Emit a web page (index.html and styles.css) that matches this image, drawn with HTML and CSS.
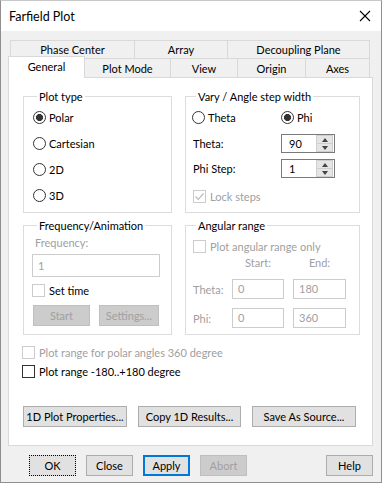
FILE: index.html
```html
<!DOCTYPE html>
<html>
<head>
    <meta charset="UTF-8">
    <title>Farfield Plot</title>
    <link rel="stylesheet" href="styles.css">
</head>
<body>
<div class="window">
    <div class="titlebar">
        <span class="title">Farfield Plot</span>
        <svg class="close" width="12" height="12" viewBox="0 0 12 12">
            <path d="M1 1 L11 11 M11 1 L1 11" stroke="#000" stroke-width="1.1" fill="none"/>
        </svg>
    </div>
    <div class="client">
        <div class="tabs">
            <div class="tabrow back">
                <span class="tab" style="width:124px">Phase Center</span>
                <span class="tab" style="width:93px">Array</span>
                <span class="tab last" style="width:143px">Decoupling Plane</span>
            </div>
            <div class="tabrow front">
                <span class="tab active" style="width:77px">General</span>
                <span class="tab" style="width:85px">Plot Mode</span>
                <span class="tab" style="width:67px">View</span>
                <span class="tab" style="width:68px">Origin</span>
                <span class="tab last" style="width:65px">Axes</span>
            </div>
        </div>

        <div class="panel">
            <div class="groups">
                <fieldset class="group plot-type">
                    <legend>Plot type</legend>
                    <div class="opt"><span class="radio on"></span>Polar</div>
                    <div class="opt"><span class="radio"></span>Cartesian</div>
                    <div class="opt"><span class="radio"></span>2D</div>
                    <div class="opt"><span class="radio"></span>3D</div>
                </fieldset>

                <fieldset class="group vary">
                    <legend>Vary / Angle step width</legend>
                    <div class="opt pair">
                        <span class="cell"><span class="radio"></span>Theta</span>
                        <span class="cell"><span class="radio on"></span>Phi</span>
                    </div>
                    <div class="field">
                        <span class="cell">Theta:</span>
                        <span class="spin"><span class="val">90</span><span class="arrows"><i class="up"></i><i class="down"></i></span></span>
                    </div>
                    <div class="field">
                        <span class="cell">Phi Step:</span>
                        <span class="spin"><span class="val">1</span><span class="arrows"><i class="up"></i><i class="down"></i></span></span>
                    </div>
                    <div class="check lock off">
                        <span class="box">
                            <svg width="11" height="11" viewBox="0 0 11 11"><path d="M1.5 5.5 L4.3 8.3 L9.5 2.5" stroke="#bcbcbc" stroke-width="1.2" fill="none"/></svg>
                        </span>Lock steps
                    </div>
                </fieldset>

                <fieldset class="group freq">
                    <legend>Frequency/Animation</legend>
                    <div class="dim">Frequency:</div>
                    <div class="textbox wide">1</div>
                    <div class="check off dark-text"><span class="box"></span>Set time</div>
                    <div class="btnrow">
                        <span class="btn disabled start">Start</span>
                        <span class="btn disabled settings">Settings...</span>
                    </div>
                </fieldset>

                <fieldset class="group angular">
                    <legend>Angular range</legend>
                    <div class="check off"><span class="box"></span>Plot angular range only</div>
                    <div class="range">
                        <span></span>
                        <span class="head">Start:</span>
                        <span class="head end">End:</span>
                        <span class="dim">Theta:</span>
                        <span class="textbox">0</span>
                        <span class="textbox end">180</span>
                        <span class="dim">Phi:</span>
                        <span class="textbox">0</span>
                        <span class="textbox end">360</span>
                    </div>
                </fieldset>
            </div>

            <div class="check off page-check"><span class="box"></span>Plot range for polar angles 360 degree</div>
            <div class="check page-check"><span class="box"></span>Plot range -180..+180 degree</div>

            <div class="actions">
                <span class="btn" style="width:104px">1D Plot Properties...</span>
                <span class="btn" style="width:103px">Copy 1D Results...</span>
                <span class="btn" style="width:104px">Save As Source...</span>
            </div>
        </div>

        <div class="footer">
            <span class="btn focus">OK</span>
            <span class="btn">Close</span>
            <span class="btn default">Apply</span>
            <span class="btn disabled">Abort</span>
            <span class="btn help">Help</span>
        </div>
    </div>
</div>
</body>
</html>
```

FILE: styles.css
```css
html, body{
    margin: 0;
    padding: 0;
}

body{
    width: 382px;
    height: 483px;
    font: 11px Lato, "Liberation Sans", Arial, sans-serif;
    color: #000;
    background: #f0f0f0;
}

.window{
    box-sizing: border-box;
    width: 382px;
    height: 483px;
    border: 1px solid #8f8f8f;
    border-top-color: #c8c8c8;
    background: #f0f0f0;
    display: flex;
    flex-direction: column;
}

/* title bar */
.titlebar{
    height: 30px;
    background: #fff;
    display: flex;
    align-items: center;
    padding: 0 9px 0 8px;
}
.title{
    flex: 1;
    font-size: 12.5px;
}
.close{
    margin-right: 1px;
}

.client{
    flex: 1;
    padding: 9px 0 0 7px;
    display: flex;
    flex-direction: column;
}

/* tabs */
.tabrow{
    display: flex;
}
.tabrow.back{
    margin-left: 2px;
    height: 18px;
}
.tabrow.front{
    height: 19px;
    align-items: flex-end;
}
.tab{
    box-sizing: border-box;
    display: flex;
    align-items: center;
    justify-content: center;
    border-top: 1px solid #d9d9d9;
    border-left: 1px solid #d9d9d9;
    background: #f0f0f0;
    height: 100%;
}
.tab.last{
    border-right: 1px solid #d9d9d9;
}
.tab.active{
    background: #fff;
    height: 22px;
    margin-bottom: -1px;
    border-right: 1px solid #d9d9d9;
    position: relative;
    z-index: 1;
    padding-bottom: 3px;
}
.tab.active + .tab{
    border-left: none;
}

/* page */
.panel{
    box-sizing: border-box;
    width: 365px;
    height: 369px;
    background: #fff;
    border: 1px solid #d9d9d9;
    padding: 11px 0 0 14px;
}

.groups{
    display: grid;
    grid-template-columns: 149px 175px;
    grid-template-rows: 124px 117px;
    column-gap: 13px;
    row-gap: 5px;
}

.group{
    margin: 0;
    min-width: 0;
    border: 1px solid #dcdcdc;
    padding: 0 0 0 8px;
}
.group legend{
    padding: 0 2px;
    margin-left: 5px;
    line-height: 15px;
}
.vary, .angular{
    padding-left: 6px;
}
.vary legend, .angular legend{
    margin-left: 4px;
}

.opt{
    height: 26px;
    display: flex;
    align-items: center;
}
.radio{
    box-sizing: border-box;
    width: 13px;
    height: 13px;
    border: 1px solid #333;
    border-radius: 50%;
    margin-right: 3px;
    background: #fff;
    flex: none;
}
.radio.on{
    background: radial-gradient(circle, #333 0 3.3px, #fff 3.8px);
}
.plot-type .opt{
    padding-left: 1px;
}

.pair .cell{
    display: flex;
    align-items: center;
}
.cell{
    width: 89px;
    flex: none;
}

.field{
    display: flex;
    align-items: center;
    height: 19px;
    margin-top: 4px;
    padding-left: 1px;
}
.field + .field{
    margin-top: 6px;
}
.field .cell{
    width: 88px;
}

.spin{
    box-sizing: border-box;
    width: 54px;
    height: 19px;
    border: 1px solid #7a7a7a;
    display: flex;
    align-items: center;
}
.spin .val{
    flex: 1;
    padding-left: 7px;
}
.arrows{
    display: flex;
    flex-direction: column;
    width: 17px;
    height: 17px;
    margin-right: 1px;
}
.arrows i{
    flex: 1;
    background: #e5e5e5;
    border: 1px solid #cfcfcf;
    display: flex;
    align-items: center;
    justify-content: center;
}
.arrows i.down{
    border-top: none;
}
.arrows i::before{
    content: '';
    border-left: 3px solid transparent;
    border-right: 3px solid transparent;
}
.arrows i.up::before{
    border-bottom: 4px solid #444;
}
.arrows i.down::before{
    border-top: 4px solid #444;
}

/* checkboxes */
.check{
    display: flex;
    align-items: center;
    height: 15px;
}
.check .box{
    box-sizing: border-box;
    width: 13px;
    height: 13px;
    border: 1px solid #333;
    background: #fff;
    margin-right: 4px;
    flex: none;
    display: flex;
    align-items: center;
    justify-content: center;
}
.check.off .box{
    border-color: #cccccc;
}
.check.off{
    color: #a0a0a0;
}
.check.dark-text{
    color: #000;
}
.lock{
    margin-top: 11px;
    padding-left: 1px;
}

.dim{
    color: #a0a0a0;
}

/* frequency group */
.freq .dim{
    margin: 2px 0 0 3px;
    line-height: 15px;
}
.textbox{
    box-sizing: border-box;
    border: 1px solid #cccccc;
    color: #a0a0a0;
    height: 20px;
    line-height: 18px;
    padding-left: 5px;
}
.textbox.wide{
    width: 128px;
    height: 23px;
    line-height: 21px;
    margin-top: 4px;
}
.freq .check{
    margin-top: 6px;
}
.btnrow{
    display: flex;
    gap: 9px;
    margin-top: 7px;
    padding-left: 1px;
}
.start{
    width: 57px;
}
.settings{
    width: 60px;
}

/* angular range */
.angular .check{
    margin-top: 6px;
    padding-left: 1px;
}
.range{
    display: grid;
    grid-template-columns: 40px 52px 62px;
    grid-template-rows: 15px 20px 20px;
    row-gap: 9px;
    margin-top: 1px;
    align-items: center;
}
.range .dim{
    padding-left: 1px;
}
.range .head{
    color: #a0a0a0;
    text-align: center;
    line-height: 15px;
}
.range .end{
    justify-self: end;
    width: 53px;
}

.page-check{
    margin-top: 10px;
}
.page-check + .page-check{
    margin-top: 4px;
}
.page-check .box{
    margin-left: -1px;
}

.actions{
    display: flex;
    gap: 11px;
    margin-top: 27px;
}

/* buttons */
.btn{
    box-sizing: border-box;
    height: 21px;
    display: flex;
    align-items: center;
    justify-content: center;
    background: #e1e1e1;
    border: 1px solid #adadad;
    white-space: nowrap;
}
.btn.disabled{
    background: #cccccc;
    border-color: #bfbfbf;
    color: #a0a0a0;
}

.footer{
    display: flex;
    gap: 10px;
    margin-top: 9px;
    padding: 0 8px 0 21px;
}
.footer .btn{
    width: 47px;
}
.btn.focus{
    border: 1px dotted #000;
}
.btn.default{
    border: 2px solid #0078d7;
}
.btn.help{
    margin-left: auto;
}
```
